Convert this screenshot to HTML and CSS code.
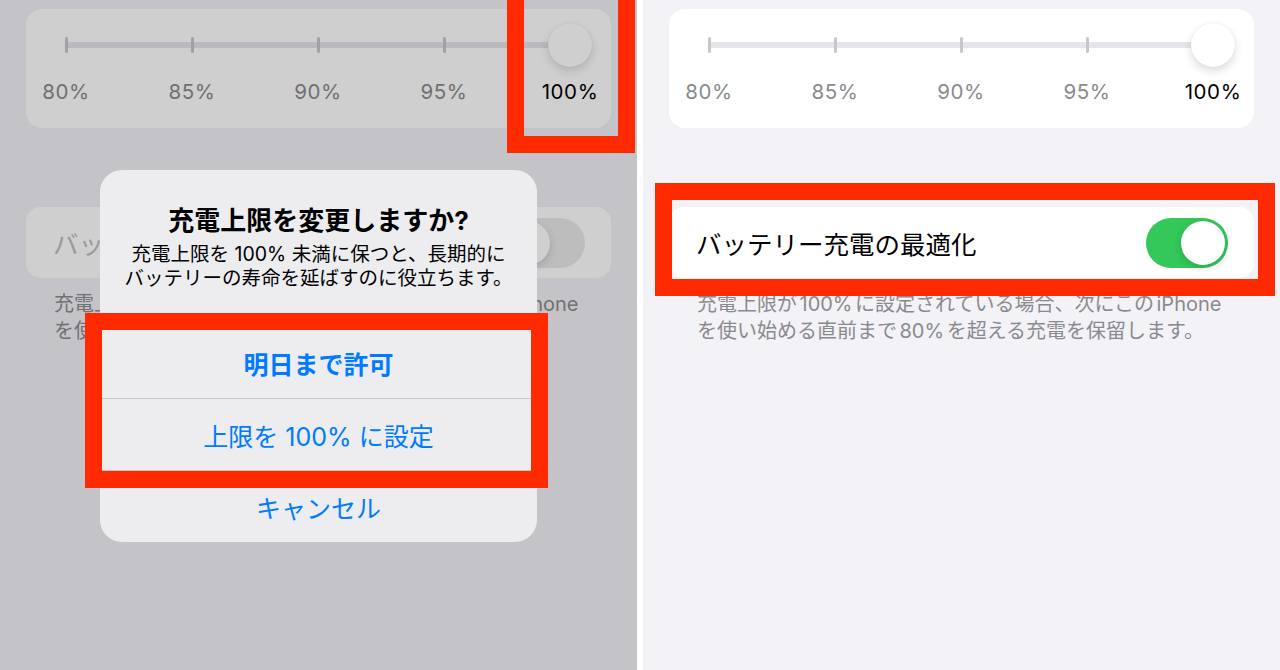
FILE: index.html
```html
<!DOCTYPE html>
<html lang="ja">
<head>
    <meta charset="UTF-8">
    <title>充電上限</title>
    <link rel="stylesheet" href="styles.css">
</head>
<body>
    <div class="screens">
        <!-- left: alert over the settings -->
        <section class="panel">
            <div class="slider-card">
                <div class="scale">
                    <span class="tick"></span>
                    <span class="tick"></span>
                    <span class="tick"></span>
                    <span class="tick"></span>
                    <span class="thumb"></span>
                    <span class="mark">80%</span>
                    <span class="mark">85%</span>
                    <span class="mark">90%</span>
                    <span class="mark">95%</span>
                    <span class="mark mark-on">100%</span>
                </div>
            </div>
            <div class="row-card">
                <span class="row-label row-label-off">バッテリー充電の最適化</span>
                <span class="switch switch-off"><span class="knob"></span></span>
            </div>
            <p class="note">充電上限が<span class="lat">100%</span>に設定されている場合、次にこの<span class="lat">iPhone</span><br>を使い始める直前まで<span class="lat">80%</span>を超える充電を保留します。</p>

            <div class="dim">
                <div class="alert">
                    <div class="alert-head">
                        <h2 class="alert-title">充電上限を変更しますか?</h2>
                        <p class="alert-msg">充電上限を 100% 未満に保つと、長期的に<br>バッテリーの寿命を延ばすのに役立ちます。</p>
                    </div>
                    <div class="alert-btn alert-btn-main">明日まで許可</div>
                    <div class="alert-btn">上限を 100% に設定</div>
                    <div class="alert-btn">キャンセル</div>
                </div>
            </div>

            <div class="callout callout-thumb"></div>
            <div class="callout callout-actions"></div>
        </section>

        <!-- right: settings after -->
        <section class="panel">
            <div class="slider-card">
                <div class="scale">
                    <span class="tick"></span>
                    <span class="tick"></span>
                    <span class="tick"></span>
                    <span class="tick"></span>
                    <span class="thumb"></span>
                    <span class="mark">80%</span>
                    <span class="mark">85%</span>
                    <span class="mark">90%</span>
                    <span class="mark">95%</span>
                    <span class="mark mark-on">100%</span>
                </div>
            </div>
            <div class="row-card">
                <span class="row-label">バッテリー充電の最適化</span>
                <span class="switch"><span class="knob"></span></span>
            </div>
            <p class="note">充電上限が<span class="lat">100%</span>に設定されている場合、次にこの<span class="lat">iPhone</span><br>を使い始める直前まで<span class="lat">80%</span>を超える充電を保留します。</p>

            <div class="callout callout-row"></div>
        </section>
    </div>
</body>
</html>
```

FILE: styles.css
```css
body {
    margin: 0;
    padding: 0;
    background-color: #ffffff;
    font-family: Inter, "Noto Sans CJK JP", sans-serif;
}
.screens {
    display: flex;
    gap: 6px;
    height: 670px;
    overflow: hidden;
}
.panel {
    position: relative;
    width: 637px;
    height: 670px;
    box-sizing: border-box;
    padding: 9px 26px 0;
    background-color: #f2f2f7;
    overflow: hidden;
    flex-shrink: 0;
}
.slider-card {
    background-color: #ffffff;
    border-radius: 16px;
    padding: 14px 0 22px;
}
.scale {
    display: grid;
    grid-template-columns: repeat(5, 126px);
    grid-template-rows: 44px 28px;
    row-gap: 11px;
    margin-left: -23px;
    justify-items: center;
    align-items: center;
    background: linear-gradient(#e5e5ea, #e5e5ea) no-repeat;
    background-size: 504px 6px;
    background-position: 63px 19px;
}
.tick {
    width: 3px;
    height: 16px;
    border-radius: 2px;
    background-color: #c7c7cc;
}
.thumb {
    width: 44px;
    height: 44px;
    border-radius: 50%;
    background-color: #ffffff;
    box-shadow: 0 4px 10px rgba(0, 0, 0, 0.14), 0 0 1px rgba(0, 0, 0, 0.12);
}
.mark {
    font-size: 20.5px;
    line-height: 28px;
    letter-spacing: 0.6px;
    color: #8a8a8e;
    white-space: nowrap;
}
.mark-on {
    color: #000000;
}
.row-card {
    margin-top: 79px;
    height: 71px;
    box-sizing: border-box;
    padding: 0 26px 0 27px;
    display: flex;
    align-items: center;
    justify-content: space-between;
    background-color: #ffffff;
    border-radius: 15px;
}
.row-label {
    font-size: 25.5px;
    color: #000000;
}
.row-label-off {
    color: #bdbdc1;
}
.switch {
    width: 82px;
    height: 50px;
    box-sizing: border-box;
    padding: 3px;
    border-radius: 25px;
    background-color: #34c759;
    display: flex;
    justify-content: flex-end;
    align-items: center;
}
.switch-off {
    background-color: #e9e9eb;
    justify-content: flex-start;
}
.knob {
    width: 44px;
    height: 44px;
    border-radius: 50%;
    background-color: #ffffff;
    box-shadow: 0 3px 8px rgba(0, 0, 0, 0.15);
}
.note {
    margin: 13px 0 0;
    padding-left: 28px;
    font-size: 20px;
    line-height: 27px;
    color: #8a8a8e;
    white-space: nowrap;
}
.lat {
    margin: 0 2.5px;
}
.dim {
    position: absolute;
    top: 0;
    left: 0;
    right: 0;
    bottom: 0;
    background-color: rgba(0, 0, 0, 0.19);
    display: flex;
    justify-content: center;
    align-items: flex-start;
    padding-top: 170px;
    box-sizing: border-box;
}
.alert {
    width: 437px;
    background-color: #ededf0;
    border-radius: 22px;
    overflow: hidden;
    text-align: center;
}
.alert-head {
    padding: 32px 16px 36px;
}
.alert-title {
    margin: 0;
    font-size: 26px;
    line-height: 38px;
    font-weight: 700;
    color: #000000;
}
.alert-msg {
    margin: 3px 0 0;
    font-size: 19.5px;
    line-height: 23.5px;
    color: #000000;
    white-space: nowrap;
}
.alert-btn {
    height: 71px;
    border-top: 1px solid #c6c6c8;
    display: flex;
    align-items: center;
    justify-content: center;
    font-size: 25px;
    color: #007aff;
}
.alert-btn-main {
    font-weight: 700;
}
.callout {
    position: absolute;
    box-sizing: border-box;
    border: 17px solid #ff2a00;
}
.callout-thumb {
    left: 507px;
    top: -20px;
    width: 128px;
    height: 173px;
}
.callout-actions {
    left: 85px;
    top: 313px;
    width: 463px;
    height: 175px;
}
.callout-row {
    left: 12px;
    top: 183px;
    width: 620px;
    height: 113px;
}
```
